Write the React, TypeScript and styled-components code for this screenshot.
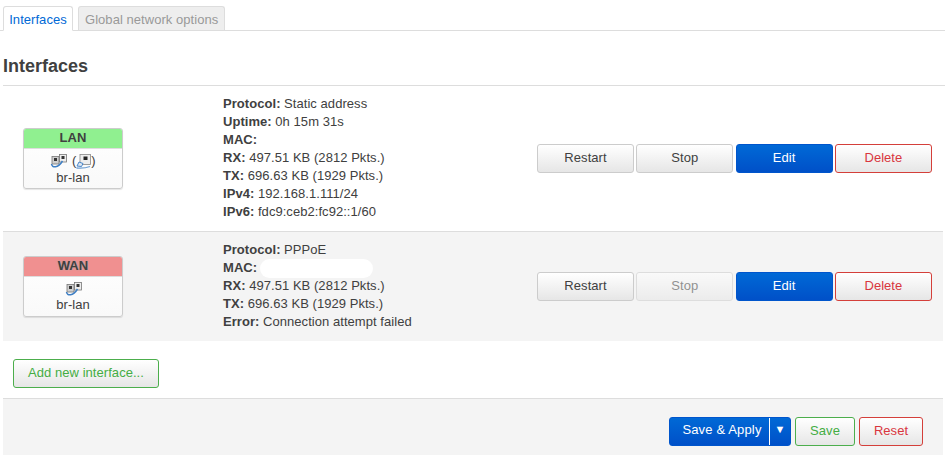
import React from "react";
import styled, { createGlobalStyle } from "styled-components";

const Global = createGlobalStyle`
    html, body { margin: 0; padding: 0; background: #fff; }
    body {
        font-family: "Liberation Sans", Arial, sans-serif;
        font-size: 13px;
        letter-spacing: 0.05px;
        color: #404040;
        width: 945px;
        height: 455px;
        overflow: hidden;
    }
`
const Tabs = styled.ul`
    list-style: none;
    display: flex;
    gap: 5px;
    margin: 0;
    padding: 6px 0 0 3px;
    height: 24px;
    border-bottom: 1px solid #ddd;
`
const Tab = styled.li<{ $active?: boolean }>`
    box-sizing: border-box;
    height: ${(p) => (p.$active ? 25 : 24)}px;
    padding: 0 ${(p) => (p.$active ? 5.2 : 6)}px;
    line-height: 25px;
    font-size: 13px;
    border: 1px solid #ddd;
    border-bottom: ${(p) => (p.$active ? "1px solid #fff" : "none")};
    border-radius: 3px 3px 0 0;
    color: ${(p) => (p.$active ? "#0069d6" : "#999")};
    background: ${(p) => (p.$active ? "#fff" : "#eee")};
`
const Title = styled.h2`
    margin: 0 0 0 3px;
    padding: 24px 0 8px;
    font-size: 18px;
    line-height: 22px;
    font-weight: bold;
    letter-spacing: 0;
    color: #404040;
    border-bottom: 1px solid #ddd;
`
const Table = styled.div`
    margin: 0 2px 0 3px;
`
const Row = styled.div<{ $shaded?: boolean; $height: number }>`
    display: grid;
    grid-template-columns: 220px 314px 1fr;
    align-items: center;
    box-sizing: border-box;
    height: ${(p) => p.$height}px;
    background: ${(p) => (p.$shaded ? "#f4f4f4" : "#fff")};
    border-bottom: ${(p) => (p.$shaded ? "none" : "1px solid #ddd")};
`
const Badge = styled.div`
    box-sizing: border-box;
    width: 100px;
    height: 61px;
    margin-left: 20px;
    border: 1px solid #ccc;
    border-radius: 3px;
    background: linear-gradient(#fff, #f9f9f9);
    box-shadow: 0 1px 1px rgba(0, 0, 0, 0.1);
    overflow: hidden;
    text-align: center;
`
const BadgeHead = styled.div<{ $color: string; $shadow?: boolean }>`
    height: 19px;
    line-height: 17px;
    font-weight: bold;
    font-size: 13px;
    background: ${(p) => p.$color};
    text-shadow: ${(p) => (p.$shadow ? "0 0 2px #aaa" : "none")};
    border-bottom: 1px solid #ddd;
`
const IconLine = styled.div<{ $h: number }>`
    display: flex;
    justify-content: center;
    align-items: center;
    gap: 4.7px;
    height: ${(p) => p.$h}px;
    margin-top: 3px;
    font-size: 13px;
    line-height: 18px;
    color: #404040;
`
const Paren = styled.span`
    display: flex;
    align-items: center;
`
const Device = styled.div`
    line-height: 15px;
    font-size: 13px;
`
const Info = styled.div`
    padding-bottom: 2px;
    line-height: 18px;
    font-size: 13px;
    white-space: nowrap;
`
const Line = styled.div`
    display: flex;
    gap: 3.6px;
    height: 18px;
    b { font-weight: bold; }
`
const Blank = styled.span`
    display: block;
    width: 113px;
    height: 19px;
    margin-left: -1px;
    border-radius: 10px;
    background: #fff;
`
const Actions = styled.div`
    display: flex;
    gap: 2.3px;
    align-items: center;
`
const Btn = styled.button<{ $kind?: "plain" | "blue" | "green" | "red"; $off?: boolean; $w?: number }>`
    box-sizing: border-box;
    width: ${(p) => (p.$w ? p.$w + "px" : "97px")};
    height: 29px;
    padding: 0 0 2px;
    font-family: inherit;
    font-size: 13px;
    letter-spacing: 0.05px;
    border-radius: 3px;
    border: 1px solid
        ${(p) =>
            p.$kind === "blue" ? "#0055cc" : p.$kind === "green" ? "#4cae4c" : p.$kind === "red" ? "#d43f3a" : "#ccc"};
    color: ${(p) =>
        p.$kind === "blue" ? "#fff" : p.$kind === "green" ? "#44ad44" : p.$kind === "red" ? "#d9363e" : "#404040"};
    background: ${(p) =>
        p.$kind === "blue" ? "linear-gradient(#0069d6, #0050c8)" : "linear-gradient(#fff, #e6e6e6)"};
    opacity: ${(p) => (p.$off ? 0.55 : 1)};
`
const AddWrap = styled.div`
    padding: 18px 0 10px 13px;
`
const Footer = styled.div`
    display: flex;
    justify-content: flex-end;
    gap: 4px;
    box-sizing: border-box;
    height: 57px;
    margin: 0 2px 0 3px;
    padding: 18px 20px 0 0;
    background: #f4f4f4;
    border-top: 1px solid #ddd;
`
const Split = styled.div`
    box-sizing: border-box;
    display: flex;
    align-items: center;
    width: 122px;
    height: 29px;
    border-radius: 3px;
    border: 1px solid #0055cc;
    color: #fff;
    background: linear-gradient(#0069d6, #0050c8);
    letter-spacing: 0.15px;
`
const SplitLabel = styled.span`
    width: 100px;
    padding-left: 5px;
    box-sizing: border-box;
    text-align: center;
    height: 27px;
    line-height: 24px;
    border-right: 1px solid #fff;
`
const SplitArrow = styled.span`
    flex: 1;
    height: 27px;
    line-height: 23px;
    text-align: center;
    font-size: 11px;
`

const Eth = () => (
    <svg width={17} height={14} viewBox="0 0 17 14">
        <rect x="9.5" y="0.5" width="7" height="7.5" fill="#eee" stroke="#777" strokeWidth="0.8" />
        <rect x="11.5" y="2" width="3" height="3" fill="#333" />
        <rect x="2" y="2.5" width="7" height="7.5" fill="#cfcfcf" stroke="#777" strokeWidth="0.8" />
        <rect x="4" y="4" width="3" height="3" fill="#333" />
        <path d="M1.5 10 C2 14 8 14.5 12.5 7" fill="none" stroke="#3f7fc4" strokeWidth="1.5" />
    </svg>
)

const Port = () => (
    <svg width={15} height={15} viewBox="0 0 15 15">
        <rect x="4" y="0.5" width="10.5" height="10" fill="#eee" stroke="#888" strokeWidth="0.8" />
        <rect x="7.5" y="2.5" width="4" height="3.5" fill="#222" />
        <path d="M1 12 L3 8 L7 9.5 L5.5 12.5 Z" fill="#dfe8f2" stroke="#4a86c8" strokeWidth="1" />
        <path d="M0.5 14 C5 14.5 10 14 14 12.5" fill="none" stroke="#6f9fd2" strokeWidth="1.3" />
    </svg>
)

const Field = ({ k, v }: { k: string; v: React.ReactNode }) => (
    <Line>
        <b>{k}:</b>
        {v}
    </Line>
)

export default function App() {
    return (
        <>
            <Global />
            <Tabs>
                <Tab $active>Interfaces</Tab>
                <Tab>Global network options</Tab>
            </Tabs>
            <Title>Interfaces</Title>
            <Table>
                <Row $height={146}>
                    <Badge>
                        <BadgeHead $color="#90f090">LAN</BadgeHead>
                        <IconLine $h={18}>
                            <Eth />
                            <Paren>
                                (
                                <Port />)
                            </Paren>
                        </IconLine>
                        <Device>br-lan</Device>
                    </Badge>
                    <Info>
                        <Field k="Protocol" v="Static address" />
                        <Field k="Uptime" v="0h 15m 31s" />
                        <Field k="MAC" v="" />
                        <Field k="RX" v="497.51 KB (2812 Pkts.)" />
                        <Field k="TX" v="696.63 KB (1929 Pkts.)" />
                        <Field k="IPv4" v="192.168.1.111/24" />
                        <Field k="IPv6" v="fdc9:ceb2:fc92::1/60" />
                    </Info>
                    <Actions>
                        <Btn>Restart</Btn>
                        <Btn>Stop</Btn>
                        <Btn $kind="blue">Edit</Btn>
                        <Btn $kind="red">Delete</Btn>
                    </Actions>
                </Row>
                <Row $shaded $height={109}>
                    <Badge>
                        <BadgeHead $color="#f09090" $shadow>WAN</BadgeHead>
                        <IconLine $h={17}>
                            <Eth />
                        </IconLine>
                        <Device>br-lan</Device>
                    </Badge>
                    <Info>
                        <Field k="Protocol" v="PPPoE" />
                        <Field k="MAC" v={<Blank />} />
                        <Field k="RX" v="497.51 KB (2812 Pkts.)" />
                        <Field k="TX" v="696.63 KB (1929 Pkts.)" />
                        <Field k="Error" v="Connection attempt failed" />
                    </Info>
                    <Actions>
                        <Btn>Restart</Btn>
                        <Btn $off>Stop</Btn>
                        <Btn $kind="blue">Edit</Btn>
                        <Btn $kind="red">Delete</Btn>
                    </Actions>
                </Row>
            </Table>
            <AddWrap>
                <Btn $kind="green" $w={146}>Add new interface...</Btn>
            </AddWrap>
            <Footer>
                <Split>
                    <SplitLabel>Save &amp; Apply</SplitLabel>
                    <SplitArrow>▼</SplitArrow>
                </Split>
                <Btn $kind="green" $w={60}>Save</Btn>
                <Btn $kind="red" $w={64}>Reset</Btn>
            </Footer>
        </>
    )
}
